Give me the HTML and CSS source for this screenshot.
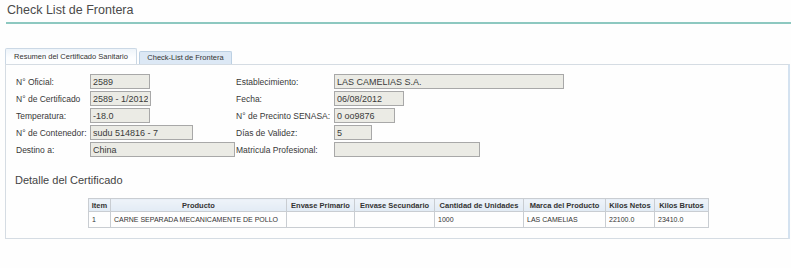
FILE: index.html
```html
<!doctype html>
<html lang="es">
	<head>
		<meta charset="utf-8">
		<title>Check List de Frontera</title>
		<link rel="stylesheet" href="styles.css">
	</head>
	<body>
		<h1 class="page-title">Check List de Frontera</h1>

		<div class="tabs">
			<div class="tab tab-active">Resumen del Certificado Sanitario</div>
			<div class="tab">Check-List de Frontera</div>
		</div>

		<div class="panel">
			<div class="form-grid">
				<label>N° Oficial:</label>
				<input class="field w-60" type="text" value="2589" readonly />
				<label>Establecimiento:</label>
				<input class="field w-230" type="text" value="LAS CAMELIAS S.A." readonly />

				<label>N° de Certificado</label>
				<input class="field w-61" type="text" value="2589 - 1/2012" readonly />
				<label>Fecha:</label>
				<input class="field w-70" type="text" value="06/08/2012" readonly />

				<label>Temperatura:</label>
				<input class="field w-60" type="text" value="-18.0" readonly />
				<label>N° de Precinto SENASA:</label>
				<input class="field w-61" type="text" value="0 oo9876" readonly />

				<label>N° de Contenedor:</label>
				<input class="field w-103" type="text" value="sudu 514816 - 7" readonly />
				<label>Días de Validez:</label>
				<input class="field w-38" type="text" value="5" readonly />

				<label>Destino a:</label>
				<input class="field w-145" type="text" value="China" readonly />
				<label>Matricula Profesional:</label>
				<input class="field w-146" type="text" value="" readonly />
			</div>

			<h2 class="section-title">Detalle del Certificado</h2>

			<table class="detail">
				<colgroup>
					<col class="c-item">
					<col class="c-producto">
					<col class="c-primario">
					<col class="c-secundario">
					<col class="c-cantidad">
					<col class="c-marca">
					<col class="c-netos">
					<col class="c-brutos">
				</colgroup>
				<thead>
					<tr>
						<th>Item</th>
						<th>Producto</th>
						<th>Envase Primario</th>
						<th>Envase Secundario</th>
						<th>Cantidad de Unidades</th>
						<th>Marca del Producto</th>
						<th>Kilos Netos</th>
						<th>Kilos Brutos</th>
					</tr>
				</thead>
				<tbody>
					<tr>
						<td>1</td>
						<td>CARNE SEPARADA MECANICAMENTE DE POLLO</td>
						<td></td>
						<td></td>
						<td>1000</td>
						<td>LAS CAMELIAS</td>
						<td>22100.0</td>
						<td>23410.0</td>
					</tr>
				</tbody>
			</table>
		</div>
	</body>
</html>
```

FILE: styles.css
```css
html {
	font-family: "Liberation Sans", Arial, sans-serif;
	background: #fefefe;
	color: #333;
}

body {
	margin: 0;
}

.page-title {
	margin: 0 0 0 6px;
	padding: 3px 0 5px 1px;
	font-size: 12.5px;
	line-height: 14px;
	font-weight: normal;
	color: #4a4a4a;
	border-bottom: 2px solid #8dc8c0;
}

.tabs {
	display: flex;
	align-items: flex-end;
	gap: 2px;
	margin: 24px 0 0 5px;
}

.tab {
	box-sizing: border-box;
	height: 13px;
	font-size: 7.5px;
	line-height: 12px;
	text-align: center;
	white-space: nowrap;
	color: #333;
	background: #dce8f5;
	border: 1px solid #bcd0e3;
	border-bottom: none;
	border-radius: 2px 2px 0 0;
}

.tab-active {
	width: 132px;
	height: 16px;
	line-height: 15px;
	background: linear-gradient(#eef4fa, #fdfeff 60%);
	border-color: #cbd8e5;
}

.tab:not(.tab-active) {
	width: 93px;
}

.panel {
	margin: 0 1px 0 5px;
	padding: 9px 10px 10px 10px;
	border: 1px solid #d5dce3;
	border-right: 2px solid #d4e2f0;
}

.form-grid {
	display: grid;
	grid-template-columns: 74px 146px 98px 1fr;
	grid-auto-rows: 15px;
	row-gap: 2px;
	align-items: center;
}

.form-grid label {
	font-size: 8.5px;
	color: #383838;
	white-space: nowrap;
}

.field {
	box-sizing: border-box;
	height: 15px;
	margin: 0;
	padding: 0 2px;
	font-family: "Liberation Sans", Arial, sans-serif;
	font-size: 9px;
	color: #3a3a3a;
	background: #ebebe5;
	border: 1px solid #a8a8a8;
	border-radius: 0;
}

.w-38 { width: 38px; }
.w-60 { width: 60px; }
.w-61 { width: 61px; }
.w-70 { width: 70px; }
.w-103 { width: 103px; }
.w-145 { width: 145px; }
.w-146 { width: 146px; }
.w-230 { width: 230px; }

.section-title {
	margin: 17px 0 0 -1px;
	font-size: 11px;
	line-height: 13px;
	font-weight: normal;
	color: #444;
}

.detail {
	margin: 11px 0 0 72px;
	width: 620px;
	table-layout: fixed;
	border-collapse: collapse;
	color: #333;
}

.detail th,
.detail td {
	border: 1px solid #c9cdd2;
	white-space: nowrap;
	overflow: hidden;
}

.detail th {
	height: 12px;
	padding: 0 2px;
	font-size: 7.5px;
	font-weight: bold;
	text-align: center;
	background: linear-gradient(#eef3f9, #e2ebf5);
}

.detail td {
	height: 15px;
	padding: 0 3px;
	font-size: 7px;
	text-align: left;
}

.c-item { width: 22px; }
.c-producto { width: 176px; }
.c-primario { width: 68px; }
.c-secundario { width: 80px; }
.c-cantidad { width: 89px; }
.c-marca { width: 82px; }
.c-netos { width: 49px; }
.c-brutos { width: 54px; }
```
